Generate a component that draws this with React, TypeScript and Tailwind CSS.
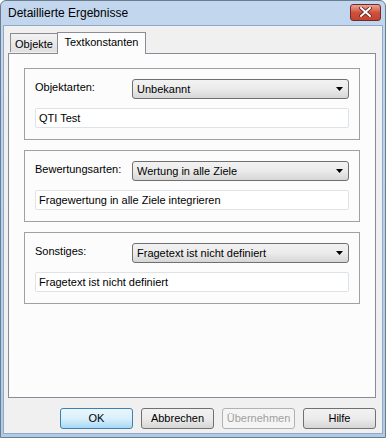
import React from "react";

const font = { fontFamily: '"Liberation Sans", Arial, sans-serif' };

function Combo({ text }: { text: string }) {
  return (
    <div className="flex-1 h-[20px] flex items-center justify-between rounded-[3px] border border-[#707070] bg-gradient-to-b from-[#f2f2f2] via-[#ebebeb] to-[#d6d6d6] pl-[4px] pr-[5px] text-[11px] text-black">
      <span>{text}</span>
      <svg width="7" height="4" viewBox="0 0 7 4"><path d="M0 0H7L3.5 4Z" fill="#000" /></svg>
    </div>
  );
}

function Group({ label, combo, text }: { label: string; combo: string; text: string }) {
  return (
    <div className="h-[72px] border border-[#a0a0a0] pt-[10px] px-[10px] flex flex-col gap-[9px]">
      <div className="flex items-center h-[20px]">
        <div className="w-[97px] text-[11px] text-black -mt-[3px]">{label}</div>
        <Combo text={combo} />
      </div>
      <div className="h-[20px] border border-[#dde3e9] rounded-[2px] bg-white flex items-center pl-[3px] text-[11px] text-black">
        {text}
      </div>
    </div>
  );
}

function Btn({ children, def, disabled }: { children: React.ReactNode; def?: boolean; disabled?: boolean }) {
  const cls = def
    ? "border-[#3c7fb1] bg-gradient-to-b from-[#eaf6fd] via-[#d9f0fc] to-[#a7d9f5] text-black"
    : disabled
    ? "border-[#adb2b5] bg-[#f4f4f4] text-[#a0a0a0]"
    : "border-[#707070] bg-gradient-to-b from-[#f2f2f2] via-[#ebebeb] to-[#d6d6d6] text-black";
  return (
    <div className={`w-[73px] h-[21px] rounded-[3px] border flex items-center justify-center text-[11px] ${cls}`}>
      {children}
    </div>
  );
}

export default function App() {
  return (
    <div className="w-[386px] h-[438px] bg-white" style={font}>
      <div className="w-[386px] h-[438px] rounded-t-[6px] border border-[#6a7c8e] bg-gradient-to-b from-[#c2d7ee] to-[#b0cbe6] flex flex-col">
        <div className="h-[24px] flex items-center justify-between pl-[7px] pr-[4px]">
          <span className="text-[12px] text-black">Detaillierte Ergebnisse</span>
          <div className="w-[31px] h-[17px] -mt-[2px] rounded-[3px] border border-[#6d2d2d] bg-gradient-to-b from-[#e8a493] via-[#d1503b] to-[#c4432f] flex items-center justify-center">
            <svg width="13" height="10" viewBox="0 0 13 10">
              <path d="M2 1L11 9M11 1L2 9" stroke="#5a2020" strokeWidth="3.6" strokeLinecap="square" />
              <path d="M2 1L11 9M11 1L2 9" stroke="#ffffff" strokeWidth="2" strokeLinecap="square" />
            </svg>
          </div>
        </div>
        <div className="flex-1 mx-[2px] mb-[3px] border border-[#8eaac8] bg-[#f0f0f0] flex flex-col pl-[4px] pr-[6px] pt-[6px]">
          <div className="flex items-end h-[21px] pl-[2px] relative z-10">
            <div className="h-[19px] w-[48px] border border-b-0 border-[#898c95] bg-gradient-to-b from-[#f2f2f2] to-[#e0e0e0] flex items-center justify-center text-[11px] text-black mb-[1px] pt-[2px]">
              Objekte
            </div>
            <div className="h-[22px] w-[89px] -ml-[1px] border border-b-0 border-[#898c95] bg-[#fcfcfc] flex items-center justify-center text-[11px] text-black -mb-[1px] pb-[2px]">
              Textkonstanten
            </div>
          </div>
          <div className="h-[345px] border border-[#898c95] bg-[#fcfcfc] px-[15px] pt-[14px] flex flex-col gap-[10px]">
            <Group label="Objektarten:" combo="Unbekannt" text="QTI Test" />
            <Group label="Bewertungsarten:" combo="Wertung in alle Ziele" text="Fragewertung in alle Ziele integrieren" />
            <Group label="Sonstiges:" combo="Fragetext ist nicht definiert" text="Fragetext ist nicht definiert" />
          </div>
          <div className="flex justify-end gap-[8px] mt-[10px] pr-[0px]">
            <Btn def>OK</Btn>
            <Btn>Abbrechen</Btn>
            <Btn disabled>Übernehmen</Btn>
            <Btn>Hilfe</Btn>
          </div>
        </div>
      </div>
    </div>
  );
}
